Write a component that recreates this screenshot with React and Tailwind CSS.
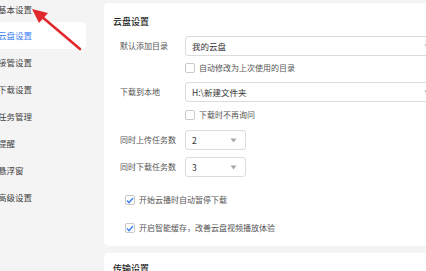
import React from 'react';

const navItems = ['基本设置', '云盘设置', '接管设置', '下载设置', '任务管理', '提醒', '悬浮窗', '高级设置'];

const Caret = () => (
  <svg width="7" height="5" viewBox="0 0 7 5" className="shrink-0">
    <path d="M0.5 0.5 L6.5 0.5 L3.5 4.5 Z" fill="#a8a8a8" />
  </svg>
);

const CheckBox = ({ checked }) => (
  <span className="w-[10px] h-[10px] rounded-[2px] border border-[#c9c9c9] bg-white flex items-center justify-center shrink-0">
    {checked && (
      <svg width="8" height="7" viewBox="0 0 8 7">
        <path d="M1 3.6 L3 5.6 L7 1" fill="none" stroke="#3b82f6" strokeWidth="1.4" />
      </svg>
    )}
  </span>
);

const Field = ({ label, value, small, mt }) => (
  <div className={`flex items-center ${mt}`}>
    <span className="w-[65px] ml-[7px] text-[8px] text-[#555]">{label}</span>
    <div
      className={`h-[20px] ${small ? 'w-[61px]' : 'flex-1'} border border-[#dcdcdc] rounded-[3px] bg-white flex items-center justify-between pl-[6px] ${small ? 'pr-[8px]' : 'pr-[12px]'}`}
    >
      <span className="text-[8.5px] text-[#333]">{value}</span>
      <Caret />
    </div>
  </div>
);

const SubCheck = ({ label, mt }) => (
  <div className={`flex items-center gap-[4px] ml-[72px] h-[12px] ${mt}`}>
    <CheckBox />
    <span className="text-[8px] text-[#555]">{label}</span>
  </div>
);

export default function App() {
  return (
    <div
      className="relative w-[426px] h-[271px] overflow-hidden flex bg-[#f4f4f4]"
      style={{ fontFamily: '"Noto Sans CJK SC", "Noto Sans", sans-serif' }}
    >
      {/* Sidebar */}
      <div className="w-[104px] shrink-0 flex flex-col -mt-[4.5px]">
        {navItems.map((item) => (
          <div
            key={item}
            className={`h-[26.9px] flex items-center -ml-[2px] w-[88px] rounded-[4px] ${
              item === '云盘设置' ? 'bg-white text-[#3b7ff5]' : 'text-[#444]'
            }`}
          >
            <span className="text-[8.5px] whitespace-nowrap">{item}</span>
          </div>
        ))}
      </div>

      {/* Main */}
      <div className="flex-1 flex flex-col pt-[3px] gap-[7px]">
        <div className="h-[243px] w-[340px] shrink-0 bg-white rounded-l-[5px] pl-[9px] pt-[13px] flex flex-col">
          <div className="text-[9px] leading-[12px] text-[#222] font-medium">云盘设置</div>
          <Field label="默认添加目录" value="我的云盘" mt="mt-[8px]" />
          <SubCheck label="自动修改为上次使用的目录" mt="mt-[6px]" />
          <Field label="下载到本地" value="H:\新建文件夹" mt="mt-[8px]" />
          <SubCheck label="下载时不再询问" mt="mt-[7px]" />
          <Field label="同时上传任务数" value="2" small mt="mt-[9px]" />
          <Field label="同时下载任务数" value="3" small mt="mt-[7px]" />
          <div className="flex items-center gap-[4px] ml-[12px] h-[12px] mt-[17px]">
            <CheckBox checked />
            <span className="text-[8px] text-[#555]">开始云播时自动暂停下载</span>
          </div>
          <div className="flex items-center gap-[4px] ml-[12px] h-[12px] mt-[16px]">
            <CheckBox checked />
            <span className="text-[8px] text-[#555]">开启智能缓存，改善云盘视频播放体验</span>
          </div>
        </div>
        <div className="h-[60px] w-[340px] shrink-0 bg-white rounded-l-[5px] pl-[9px] pt-[10px]">
          <div className="text-[9px] leading-[12px] text-[#222] font-medium">传输设置</div>
        </div>
      </div>

      {/* Red annotation arrow */}
      <svg className="absolute left-0 top-0 pointer-events-none" width="120" height="70" viewBox="0 0 120 70">
        <line x1="80" y1="49" x2="41" y2="16" stroke="#e0282d" strokeWidth="2.6" strokeLinecap="round" />
        <path d="M32 9 L48 13 L39 23 Z" fill="#e0282d" />
      </svg>
    </div>
  );
}
